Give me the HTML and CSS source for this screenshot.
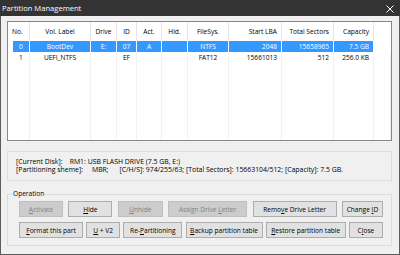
FILE: index.html
```html
<!DOCTYPE html>
<html lang="en">
<head>
  <meta charset="UTF-8">
  <title>Partition Management</title>
  <link rel="stylesheet" href="styles.css">
</head>
<body>

  <div class="window">
    <div class="titlebar">
      <span class="title">Partition Management</span>
      <svg class="close-x" width="8" height="8" viewBox="0 0 8 8">
        <path d="M0.5 0.5 L7.5 7.5 M7.5 0.5 L0.5 7.5" stroke="#fff" stroke-width="1"/>
      </svg>
    </div>

    <div class="content">
      <div class="list">
        <table class="grid">
          <colgroup>
            <col class="c-no"><col class="c-label"><col class="c-drive"><col class="c-id">
            <col class="c-act"><col class="c-hid"><col class="c-fs"><col class="c-lba">
            <col class="c-total"><col class="c-cap"><col class="c-rest">
          </colgroup>
          <thead>
            <tr>
              <th class="left">No.</th>
              <th>Vol. Label</th>
              <th>Drive</th>
              <th>ID</th>
              <th>Act.</th>
              <th>Hid.</th>
              <th>FileSys.</th>
              <th class="right">Start LBA</th>
              <th class="right">Total Sectors</th>
              <th class="right">Capacity</th>
              <th></th>
            </tr>
          </thead>
          <tbody>
            <tr class="sel">
              <td class="first">0</td>
              <td>BootDev</td>
              <td>E:</td>
              <td>07</td>
              <td>A</td>
              <td></td>
              <td>NTFS</td>
              <td class="right">2048</td>
              <td class="right">15658965</td>
              <td class="right">7.5 GB</td>
              <td class="blank"></td>
            </tr>
            <tr>
              <td class="first">1</td>
              <td>UEFI_NTFS</td>
              <td></td>
              <td>EF</td>
              <td></td>
              <td></td>
              <td>FAT12</td>
              <td class="right">15661013</td>
              <td class="right">512</td>
              <td class="right">256.0 KB</td>
              <td></td>
            </tr>
            <tr class="fill">
              <td></td><td></td><td></td><td></td><td></td><td></td>
              <td></td><td></td><td></td><td></td><td></td>
            </tr>
          </tbody>
        </table>
      </div>

      <div class="info">
        <div class="info-line">[Current Disk]:    RM1: USB FLASH DRIVE (7.5 GB, E:)</div>
        <div class="info-line">[Partitioning sheme]:     MBR;      [C/H/S]: 974/255/63; [Total Sectors]: 15663104/512; [Capacity]: 7.5 GB.</div>
      </div>

      <fieldset class="operation">
        <legend>Operation</legend>
        <div class="btn-row">
          <button class="btn w-activate" disabled><u>A</u>ctivate</button>
          <button class="btn w-hide"><u>H</u>ide</button>
          <button class="btn w-unhide" disabled><u>U</u>nhide</button>
          <button class="btn w-assign" disabled>Assign Drive <u>L</u>etter</button>
          <button class="btn w-remove">Remo<u>v</u>e Drive Letter</button>
          <button class="btn w-change">Change <u>I</u>D</button>
        </div>
        <div class="btn-row">
          <button class="btn w-format"><u>F</u>ormat this part</button>
          <button class="btn w-uv"><u>U</u> + V2</button>
          <button class="btn w-repart">Re-<u>P</u>artitioning</button>
          <button class="btn w-backup"><u>B</u>ackup partition table</button>
          <button class="btn w-restore"><u>R</u>estore partition table</button>
          <button class="btn w-close">C<u>l</u>ose</button>
        </div>
      </fieldset>
    </div>
  </div>

</body>
</html>
```

FILE: styles.css
```css
html, body {
  margin: 0;
  padding: 0;
}

body {
  font-family: "Open Sans", "Liberation Sans", Arial, sans-serif;
  font-size: 6.6px;
  color: #000;
  background: #f0f0f0;
}

.window {
  width: 400px;
  height: 255px;
  box-sizing: border-box;
  border: 1px solid #5c5c5c;
  border-top: none;
  background: #f0f0f0;
}

.titlebar {
  height: 16px;
  background: #333;
  color: #fff;
  display: flex;
  align-items: center;
  justify-content: space-between;
  padding: 0 6px 0 2px;
  margin: 0 -1px;
}

.title {
  font-size: 7.6px;
}

.close-x {
  display: block;
  margin-top: 1px;
}

.content {
  padding: 5px 7px 0 6px;
}

/* list view */
.list {
  height: 120px;
  box-sizing: border-box;
  border: 1px solid #828790;
  background: #fff;
  overflow: hidden;
}

.grid {
  width: 100%;
  height: 100%;
  table-layout: fixed;
  border-collapse: separate;
  border-spacing: 0;
}

.c-no { width: 22px; }
.c-label { width: 61px; }
.c-drive { width: 26px; }
.c-id { width: 20px; }
.c-act { width: 25px; }
.c-hid { width: 26px; }
.c-fs { width: 41px; }
.c-lba { width: 53px; }
.c-total { width: 52px; }
.c-cap { width: 40px; }

.grid th {
  height: 19px;
  font-weight: normal;
  text-align: center;
  padding: 0 4px;
  border-right: 1px solid #e5e5e5;
  white-space: nowrap;
  overflow: hidden;
}

.grid th:last-child {
  border-right: none;
}

.grid td {
  height: 11px;
  line-height: 11px;
  padding: 0 4px;
  text-align: center;
  border-right: 1px solid #f0f0f0;
  white-space: nowrap;
  overflow: hidden;
}

.grid .left {
  text-align: left;
}

.grid .right {
  text-align: right;
}

.grid td.first {
  text-align: left;
  padding-left: 11px;
}

.grid tr.fill td {
  height: auto;
}

.sel td {
  background: #3399ff;
  color: #fff;
  border-right-color: #fff;
}

.sel td.first {
  background: linear-gradient(to right, #fff 5px, #3399ff 5px);
}

.sel td.blank {
  background: #fff;
}

/* disk info */
.info {
  margin-top: 10px;
  height: 30px;
  box-sizing: border-box;
  border: 1px solid #dcdcdc;
  padding: 6px 8px 0;
  font-size: 6.9px;
}

.info-line {
  line-height: 8px;
  white-space: pre;
}

/* operation group */
.operation {
  margin: 9px 0 0;
  padding: 3px 8px 7px 11px;
  border: 1px solid #dcdcdc;
  min-width: 0;
}

.operation legend {
  line-height: 8px;
  padding: 0 1px;
  margin-left: -7px;
}

.btn-row {
  display: flex;
  justify-content: space-between;
}

.btn-row + .btn-row {
  margin-top: 5px;
}

.btn {
  height: 16px;
  padding: 0;
  font-family: inherit;
  font-size: 6.6px;
  color: #000;
  background: #e1e1e1;
  border: 1px solid #adadad;
  white-space: nowrap;
}

.btn:disabled {
  background: #cccccc;
  border-color: #bfbfbf;
  color: #838383;
}

.w-activate { width: 44px; }
.w-hide { width: 44px; }
.w-unhide { width: 45px; }
.w-assign { width: 79px; }
.w-remove { width: 84px; }
.w-change { width: 41px; }
.w-format { width: 64px; }
.w-uv { width: 34px; }
.w-repart { width: 59px; }
.w-backup { width: 77px; }
.w-restore { width: 80px; }
.w-close { width: 34px; }
```
